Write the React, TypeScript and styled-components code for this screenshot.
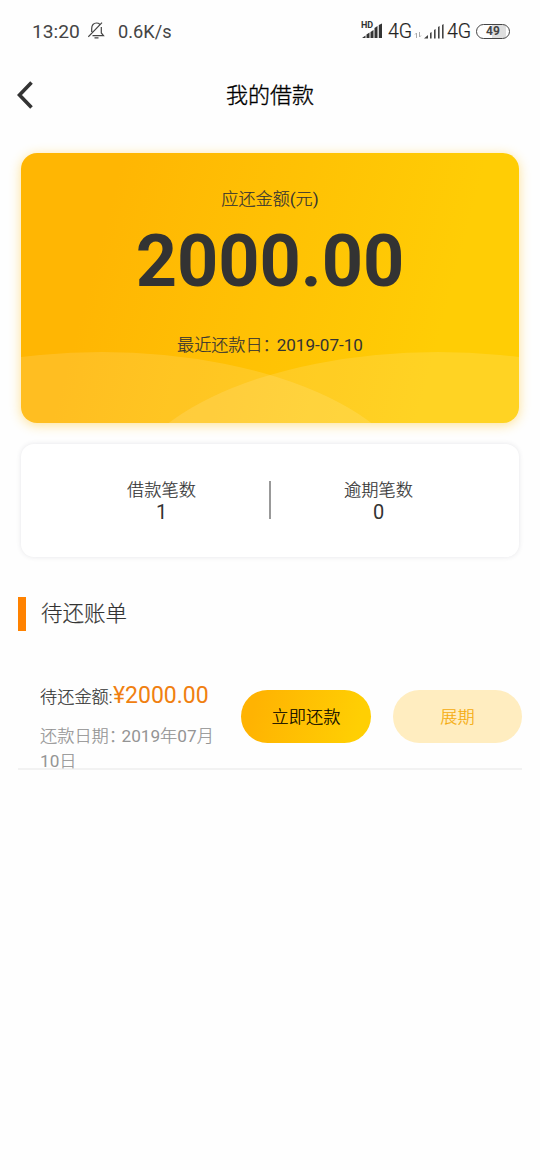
import React from "react";
import styled, { createGlobalStyle } from "styled-components";

const Global = createGlobalStyle`
  * { box-sizing: border-box; }
  body { margin: 0; background: #fefefe; color: #333; font-family: Roboto, "Noto Sans CJK SC", sans-serif; }
`;

const Screen = styled.main`
  min-height: 1170px;
  width: 540px;
  background: #fefefe;
  overflow: hidden;
`;

const StatusBar = styled.div`
  height: 62px;
  padding: 0 30px 0 32px;
  display: flex;
  align-items: center;
  justify-content: space-between;
  font-size: 19px;
  color: #444;
`;

const StatusGroup = styled.div<{ $gap?: number }>`
  display: flex;
  align-items: center;
  gap: ${(p) => p.$gap ?? 0}px;
`;

const Clock = styled.span`
  font-size: 19.2px;
  width: 48px;
  white-space: nowrap;
`;

const Speed = styled.span`
  font-size: 18.2px;
  margin-left: 5px;
`;

const Network = styled.span`
  width: 24px;
  margin: 2px 0 0 2px;
  font-size: 19.5px;
  font-weight: 300;
  line-height: 24px;
  color: #222;
  -webkit-text-stroke: 0.2px #222;
`;

const Battery = styled.div`
  width: 34px;
  height: 15px;
  margin-left: 5px;
  border: 1.5px solid #444;
  border-radius: 8px;
  background: linear-gradient(90deg, #fefefe 48%, #dedede 48%, #dedede 92%, #fefefe 92%);
  display: flex;
  align-items: center;
  justify-content: center;
  font-size: 12px;
  font-weight: 700;
  line-height: 1;
`;

const Header = styled.header`
  height: 66px;
  padding: 0 16px;
  display: grid;
  grid-template-columns: 40px 1fr 40px;
  align-items: center;
`;

const BackButton = styled.button`
  border: 0;
  padding: 0;
  background: none;
  display: flex;
`;

const Title = styled.h1`
  margin: 1px 0 0;
  font-size: 22px;
  line-height: 30px;
  font-weight: 300;
  color: #000;
  -webkit-text-stroke: 0.35px #000;
  text-align: center;
`;

const AmountCard = styled.section`
  position: relative;
  margin: 25px 21px 0 21px;
  height: 270px;
  padding-top: 33px;
  border-radius: 16px;
  background: linear-gradient(105deg, #ffb603 18%, #ffcd05 82%);
  box-shadow: 0 2px 12px rgba(255, 190, 20, 0.45);
  display: flex;
  flex-direction: column;
  align-items: center;
  overflow: hidden;
`;

const Waves = styled.svg`
  position: absolute;
  left: 0;
  bottom: 0;
`;

const Caption = styled.div`
  position: relative;
  font-size: 17.1px;
  line-height: 26px;
  font-weight: 300;
  -webkit-text-stroke: 0.2px;
`;

const Latin = styled.span`
  font-weight: 400;
  -webkit-text-stroke: 0;
`;

const Colon = styled.span<{ $trim: number }>`
  letter-spacing: -${(p) => p.$trim}px;
`;

const Amount = styled.div`
  font-size: 72px;
  line-height: 84px;
  font-weight: 700;
  margin: 8px 0 28px;
`;

const StatsCard = styled.section`
  margin: 21px 21px 0;
  height: 113px;
  padding-top: 34px;
  border-radius: 13px;
  background: #fff;
  box-shadow: 0 0 5px rgba(60, 60, 80, 0.12);
  display: grid;
  grid-template-columns: 1fr 2px 1fr;
`;

const Stat = styled.div<{ $side: "left" | "right" }>`
  display: flex;
  flex-direction: column;
  align-items: center;
  padding-${(p) => p.$side}: 33px;
`;

const StatLabel = styled.span`
  font-size: 17.2px;
  line-height: 24px;
  font-weight: 300;
  -webkit-text-stroke: 0.2px;
`;

const StatValue = styled.span`
  font-size: 20px;
  line-height: 20px;
`;

const Divider = styled.div`
  height: 38px;
  margin-top: 3px;
  background: #999;
`;

const SectionTitle = styled.h2`
  margin: 40px 0 0 18px;
  height: 34px;
  padding-left: 15px;
  border-left: 8px solid #ff8200;
  font-size: 21.5px;
  line-height: 34px;
  font-weight: 300;
  -webkit-text-stroke: 0.2px;
`;

const Bill = styled.article`
  margin: 49px 18px 0;
  height: 90px;
  padding-left: 22px;
  border-bottom: 2px solid #f2f2f2;
  display: flex;
`;

const BillInfo = styled.div`
  width: 180px;
  flex: none;
`;

const Due = styled.div`
  display: flex;
  height: 32px;
  font-size: 17.2px;
  line-height: 34px;
  font-weight: 300;
  -webkit-text-stroke: 0.2px;
  white-space: nowrap;
`;

const Price = styled.span`
  margin-left: 0.6px;
  font-size: 23px;
  line-height: 32px;
  font-weight: 400;
  -webkit-text-stroke: 0;
  color: #f08010;
`;

const DueDate = styled.div`
  margin-top: 12px;
  font-size: 17.2px;
  line-height: 25px;
  font-weight: 300;
  color: #949494;
  -webkit-text-stroke: 0.2px;
`;

const Actions = styled.div`
  display: flex;
  gap: 22px;
  margin: 10px 0 0 21px;
`;

const Pill = styled.button<{ $primary?: boolean }>`
  width: ${(p) => (p.$primary ? 130 : 129)}px;
  height: 53px;
  padding: 0 0 3px;
  border: 0;
  border-radius: 27px;
  font: inherit;
  font-size: 17.2px;
  font-weight: 300;
  -webkit-text-stroke: 0.2px;
  color: ${(p) => (p.$primary ? "#000" : "#f5ab0c")};
  background: ${(p) => (p.$primary ? "linear-gradient(105deg, #ffb302 12%, #ffcf03 88%)" : "#ffedc0")};
`;

const MutedBell = () => (
  <svg width="17" height="18" viewBox="0 0 17 18" fill="none" stroke="#444" strokeWidth="1.2">
    <path d="M3.700 10V6.500C3.700 3.200 5.600 1 8.500 1c1.300 0 2.400.4 3.300 1.200M13.300 5v6l2.200 2.700H4.500M6.500 15.900h4M.3 14.800 14 .6" />
  </svg>
);

const HdSignal = () => (
  <svg width="25" height="22" viewBox="0 0 25 22" fill="#333">
    <text x="0" y="8" fontSize="9" fontWeight="700" fontFamily="Roboto, sans-serif">HD</text>
    <path d="M1 18 4.500 15.500V18zM5.500 14.500l3-2V18h-3zM9.500 12l3-2v8h-3zM13.500 8l3-2v12h-3zM17.800 5l3.200-1.500V18h-3.200z" />
  </svg>
);

const Signal = () => (
  <svg width="22" height="20" viewBox="0 0 22 20" fill="#444">
    <path d="M1 17.500 5 14v3.500zM7 12l1.600-1v6.500H7zM11 9l1.600-1v9.500H11zM15 6l1.600-1v12.500H15zM19 4l1.600-1v14.500H19z" />
  </svg>
);

const DataArrows = () => (
  <svg width="11" height="20" viewBox="0 0 11 20" fill="none" stroke="#aaa" strokeWidth="1">
    <path d="M4.500 17v-5L3 13.500M7.500 11v5L9 14.500" />
  </svg>
);

export default function App() {
  return (
    <>
      <Global />
      <Screen>
        <StatusBar>
          <StatusGroup $gap={8}>
            <Clock>13:20</Clock>
            <MutedBell />
            <Speed>0.6K/s</Speed>
          </StatusGroup>
          <StatusGroup>
            <HdSignal />
            <Network>4G</Network>
            <DataArrows />
            <Signal />
            <Network>4G</Network>
            <Battery>49</Battery>
          </StatusGroup>
        </StatusBar>
        <Header>
          <BackButton aria-label="返回">
            <svg width="18" height="28" viewBox="0 0 18 28" fill="none" stroke="#333" strokeWidth="3.6">
              <path d="M15.500 1.500 3.500 14l12 12.500" />
            </svg>
          </BackButton>
          <Title>我的借款</Title>
        </Header>
        <AmountCard>
          <Waves width="498" height="72" viewBox="0 0 498 72" fill="#fff" fillOpacity="0.12">
            <ellipse cx="81" cy="154" rx="319" ry="153" />
            <ellipse cx="417" cy="154" rx="319" ry="153" />
          </Waves>
          <Caption>应还金额<Latin>(</Latin>元<Latin>)</Latin></Caption>
          <Amount>2000.00</Amount>
          <Caption>
            最近还款日<Colon $trim={3}>：</Colon><Latin>2019-07-10</Latin>
          </Caption>
        </AmountCard>
        <StatsCard>
          <Stat $side="left">
            <StatLabel>借款笔数</StatLabel>
            <StatValue>1</StatValue>
          </Stat>
          <Divider />
          <Stat $side="right">
            <StatLabel>逾期笔数</StatLabel>
            <StatValue>0</StatValue>
          </Stat>
        </StatsCard>
        <SectionTitle>待还账单</SectionTitle>
        <Bill>
          <BillInfo>
            <Due>
              待还金额:<Price>¥2000.00</Price>
            </Due>
            <DueDate>
              还款日期<Colon $trim={4.5}>：</Colon><Latin>2019</Latin>年<Latin>07</Latin>月<Latin>10</Latin>日
            </DueDate>
          </BillInfo>
          <Actions>
            <Pill $primary>立即还款</Pill>
            <Pill>展期</Pill>
          </Actions>
        </Bill>
      </Screen>
    </>
  );
}
